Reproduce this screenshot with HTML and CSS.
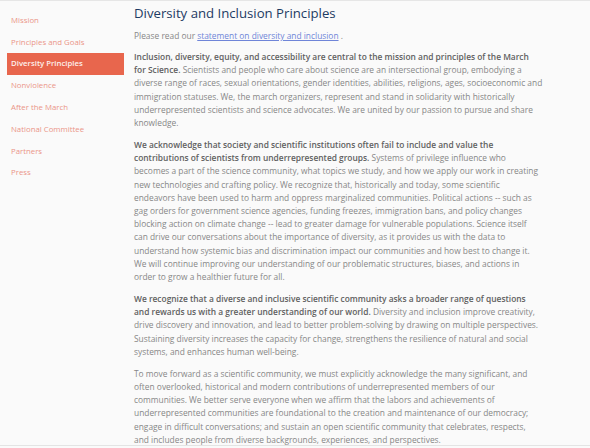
FILE: index.html
```html
<!DOCTYPE html>
<html lang="en">
<head>
<meta charset="utf-8">
<title>Diversity and Inclusion Principles</title>
<link rel="stylesheet" href="styles.css">
</head>
<body>
<div class="page">
  <nav class="sidebar">
    <a class="nav-item" href="#">Mission</a>
    <a class="nav-item" href="#">Principles and Goals</a>
    <a class="nav-item active" href="#">Diversity Principles</a>
    <a class="nav-item" href="#">Nonviolence</a>
    <a class="nav-item" href="#">After the March</a>
    <a class="nav-item" href="#">National Committee</a>
    <a class="nav-item" href="#">Partners</a>
    <a class="nav-item" href="#">Press</a>
  </nav>
  <main class="content">
    <h1 class="title">Diversity and Inclusion Principles</h1>
    <p class="intro">Please read our <a class="link" href="#">statement on diversity and inclusion</a> .</p>
    <p><strong>Inclusion, diversity, equity, and accessibility are central to the mission and principles of the March for Science.</strong> Scientists and people who care about science are an intersectional group, embodying a diverse range of races, sexual orientations, gender identities, abilities, religions, ages, socioeconomic and immigration statuses. We, the march organizers, represent and stand in solidarity with historically underrepresented scientists and science advocates. We are united by our passion to pursue and share knowledge.</p>
    <p><strong>We acknowledge that society and scientific institutions often fail to include and value the contributions of scientists from underrepresented groups.</strong> Systems of privilege influence who becomes a part of the science community, what topics we study, and how we apply our work in creating new technologies and crafting policy. We recognize that, historically and today, some scientific endeavors have been used to harm and oppress marginalized communities. Political actions -- such as gag orders for government science agencies, funding freezes, immigration bans, and policy changes blocking action on climate change -- lead to greater damage for vulnerable populations. Science itself can drive our conversations about the importance of diversity, as it provides us with the data to understand how systemic bias and discrimination impact our communities and how best to change it. We will continue improving our understanding of our problematic structures, biases, and actions in order to grow a healthier future for all.</p>
    <p><strong>We recognize that a diverse and inclusive scientific community asks a broader range of questions and rewards us with a greater understanding of our world.</strong> Diversity and inclusion improve creativity, drive discovery and innovation, and lead to better problem-solving by drawing on multiple perspectives. Sustaining diversity increases the capacity for change, strengthens the resilience of natural and social systems, and enhances human well-being.</p>
    <p>To move forward as a scientific community, we must explicitly acknowledge the many significant, and often overlooked, historical and modern contributions of underrepresented members of our communities. We better serve everyone when we affirm that the labors and achievements of underrepresented communities are foundational to the creation and maintenance of our democracy; engage in difficult conversations; and sustain an open scientific community that celebrates, respects, and includes people from diverse backgrounds, experiences, and perspectives.</p>
  </main>
</div>
</body>
</html>
```
FILE: styles.css
```css
html, body {
  margin: 0;
  padding: 0;
  background: #fafafa;
}
body {
  font-family: "Open Sans", "DejaVu Sans", sans-serif;
  font-size: 8.4px;
  line-height: 13.2px;
  color: #878787;
  border-top: 1px solid #e6e6e6;
  height: 446px;
  box-sizing: border-box;
  overflow: hidden;
}
.page {
  display: grid;
  grid-template-columns: 117px 408.5px;
  column-gap: 10px;
  padding-left: 7px;
  border-bottom: 1px solid #e4e4e4;
  height: 445px;
  box-sizing: border-box;
}
.sidebar {
  display: flex;
  flex-direction: column;
  padding-top: 8.5px;
}
.nav-item {
  display: block;
  padding: 4.3px 4px;
  color: #ea9588;
  text-decoration: none;
  font-size: 7.8px;
  line-height: 13.2px;
}
.nav-item.active {
  background: #e8664d;
  color: #fdf0ec;
  font-weight: 600;
}
.content {
  padding-top: 2px;
}
.title {
  margin: 0 0 6px;
  font-size: 13.2px;
  line-height: 20px;
  font-weight: 400;
  color: #1d3b63;
}
.content p {
  margin: 0 0 8.8px;
}
.content p.intro {
  margin-bottom: 7.8px;
}
.content strong {
  font-weight: 600;
  color: #606060;
}
.link {
  color: #6f85d8;
  text-decoration: underline;
}
```
